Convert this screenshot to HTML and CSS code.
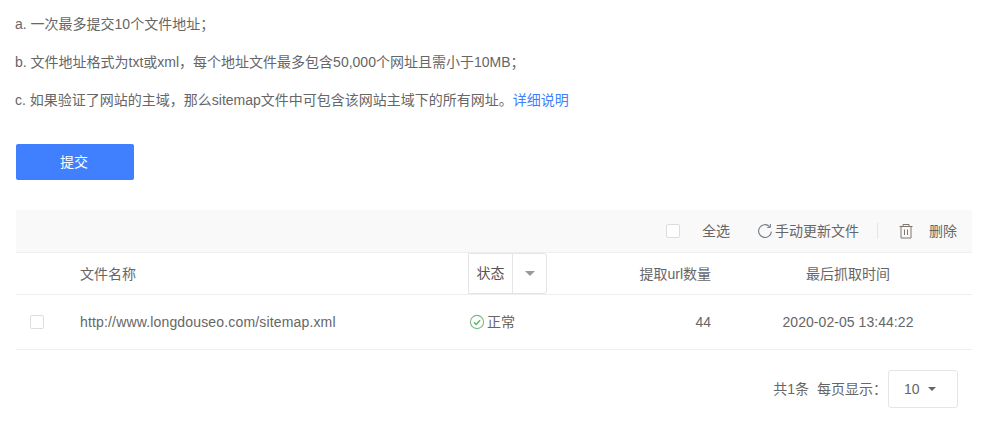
FILE: index.html
```html
<!DOCTYPE html>
<html lang="zh-CN">
<head>
<meta charset="utf-8">
<title>sitemap</title>
<link rel="stylesheet" href="styles.css">
</head>
<body>
<div class="page">
  <div class="notes">
    <p>a. 一次最多提交10个文件地址；</p>
    <p>b. 文件地址格式为txt或xml，每个地址文件最多包含50,000个网址且需小于10MB；</p>
    <p>c. 如果验证了网站的主域，那么sitemap文件中可包含该网站主域下的所有网址。<a class="link" href="#">详细说明</a></p>
  </div>
  <button class="submit" type="button">提交</button>
  <div class="toolbar">
    <span class="check"></span>
    <span class="select-all">全选</span>
    <span class="refresh">
      <svg class="icon" width="16" height="16" viewBox="0 0 16 16" fill="none" stroke="#6f7c88" stroke-width="1.1"><path d="M12.6 3.6A6.4 6.4 0 1 0 14.4 8.6"/><path d="M13.4 1v3.4h-3.2" stroke-width="1"/></svg>
      手动更新文件
    </span>
    <span class="divider"></span>
    <svg class="trash" width="16" height="16" viewBox="0 0 16 16" fill="none" stroke="#7f7670" stroke-width="1"><path d="M1.5 3.5h13M5 3.5V1.5h6v2M3 3.5v11.5h10V3.5M6.5 6.5v5.5M9.5 6.5v5.5"/></svg>
    <span class="delete">删除</span>
  </div>
  <div class="row head">
    <span class="c-name">文件名称</span>
    <span class="status-filter"><span class="status-label">状态</span><span class="status-arrow"><i class="caret caret-light"></i></span></span>
    <span class="c-count">提取url数量</span>
    <span class="c-time">最后抓取时间</span>
  </div>
  <div class="row body">
    <span class="c-check"><span class="check"></span></span>
    <span class="c-name c-url">http://www.longdouseo.com/sitemap.xml</span>
    <span class="c-status">
      <svg width="16" height="16" viewBox="0 0 16 16" fill="none"><circle cx="8" cy="8" r="6.6" stroke="#7cb98a" stroke-width="1.1"/><path d="M4.9 8.2l2.2 2.2 4-4.2" stroke="#5cb85c" stroke-width="1.4"/></svg>
      正常
    </span>
    <span class="c-count">44</span>
    <span class="c-time c-date">2020-02-05 13:44:22</span>
  </div>
  <div class="pager">
    <span>共1条</span>
    <span class="per">每页显示：</span>
    <span class="size">10<i class="caret"></i></span>
  </div>
</div>
</body>
</html>
```
FILE: styles.css
```css
* { box-sizing: border-box; }
html, body { margin: 0; padding: 0; background: #fff; }
body { font: 14px/20px "Liberation Sans", "Noto Sans CJK SC", sans-serif; color: #666; }
.page { width: 998px; height: 426px; padding: 0 26px 0 16px; overflow: hidden; }
.notes { padding-top: 14px; margin-left: -1px; }
.notes p { margin: 0 0 18px; height: 20px; }
.link { color: #4080ff; text-decoration: none; }
.submit { display: block; width: 118px; height: 36px; margin-top: 34px; border: 0; border-radius: 2px; background: #4080ff; color: #fff; font: inherit; padding: 0 2px 0 0; }
.toolbar { display: flex; align-items: center; justify-content: flex-end; height: 43px; margin-top: 30px; padding-right: 15px; background: #f9f9f9; border-bottom: 1px solid #eee; }
.check { display: block; width: 14px; height: 14px; border: 1px solid #ddd; border-radius: 2px; background: #fff; }
.select-all { margin-left: 22px; }
.refresh { display: flex; align-items: center; gap: 2px; margin-left: 27px; }
.divider { width: 1px; height: 16px; background: #e5e5e5; margin: 0 20px 0 18px; }
.delete { margin-left: 15px; }
.row { display: flex; align-items: center; border-bottom: 1px solid #eee; }
.head { height: 42px; }
.body { height: 55px; }
.c-check { width: 64px; padding-left: 14px; }
.c-name { width: 388px; }
.head .c-name { margin-left: 64px; margin-right: 0; }
.c-url { letter-spacing: 0.16px; }
.status-filter { display: flex; height: 41px; width: 79px; border: 1px solid #e5e5e5; border-radius: 0 3px 3px 0; margin-top: -1px; color: #555; }
.status-label { width: 44px; display: flex; align-items: center; justify-content: center; border-right: 1px solid #e5e5e5; }
.status-arrow { flex: 1; display: flex; align-items: center; justify-content: center; }
.caret { display: block; width: 0; height: 0; border: 4px solid transparent; border-top: 4px solid #666; border-bottom: 0; }
.caret-light { border-width: 5px 5px 0; border-top-color: #999; }
.c-status { display: flex; align-items: center; width: 79px; padding-left: 1px; gap: 2px; }
.c-count { width: 164px; text-align: right; }
.c-time { flex: 1; text-align: center; padding-left: 13px; }
.c-date { letter-spacing: 0.05px; }
.pager { display: flex; align-items: center; justify-content: flex-end; margin-top: 20px; padding-right: 14px; }
.per { margin-left: 8px; margin-right: 1px; }
.size { display: flex; align-items: center; gap: 8px; width: 70px; height: 38px; padding-left: 15px; border: 1px solid #e5e5e5; border-radius: 3px; }
```
